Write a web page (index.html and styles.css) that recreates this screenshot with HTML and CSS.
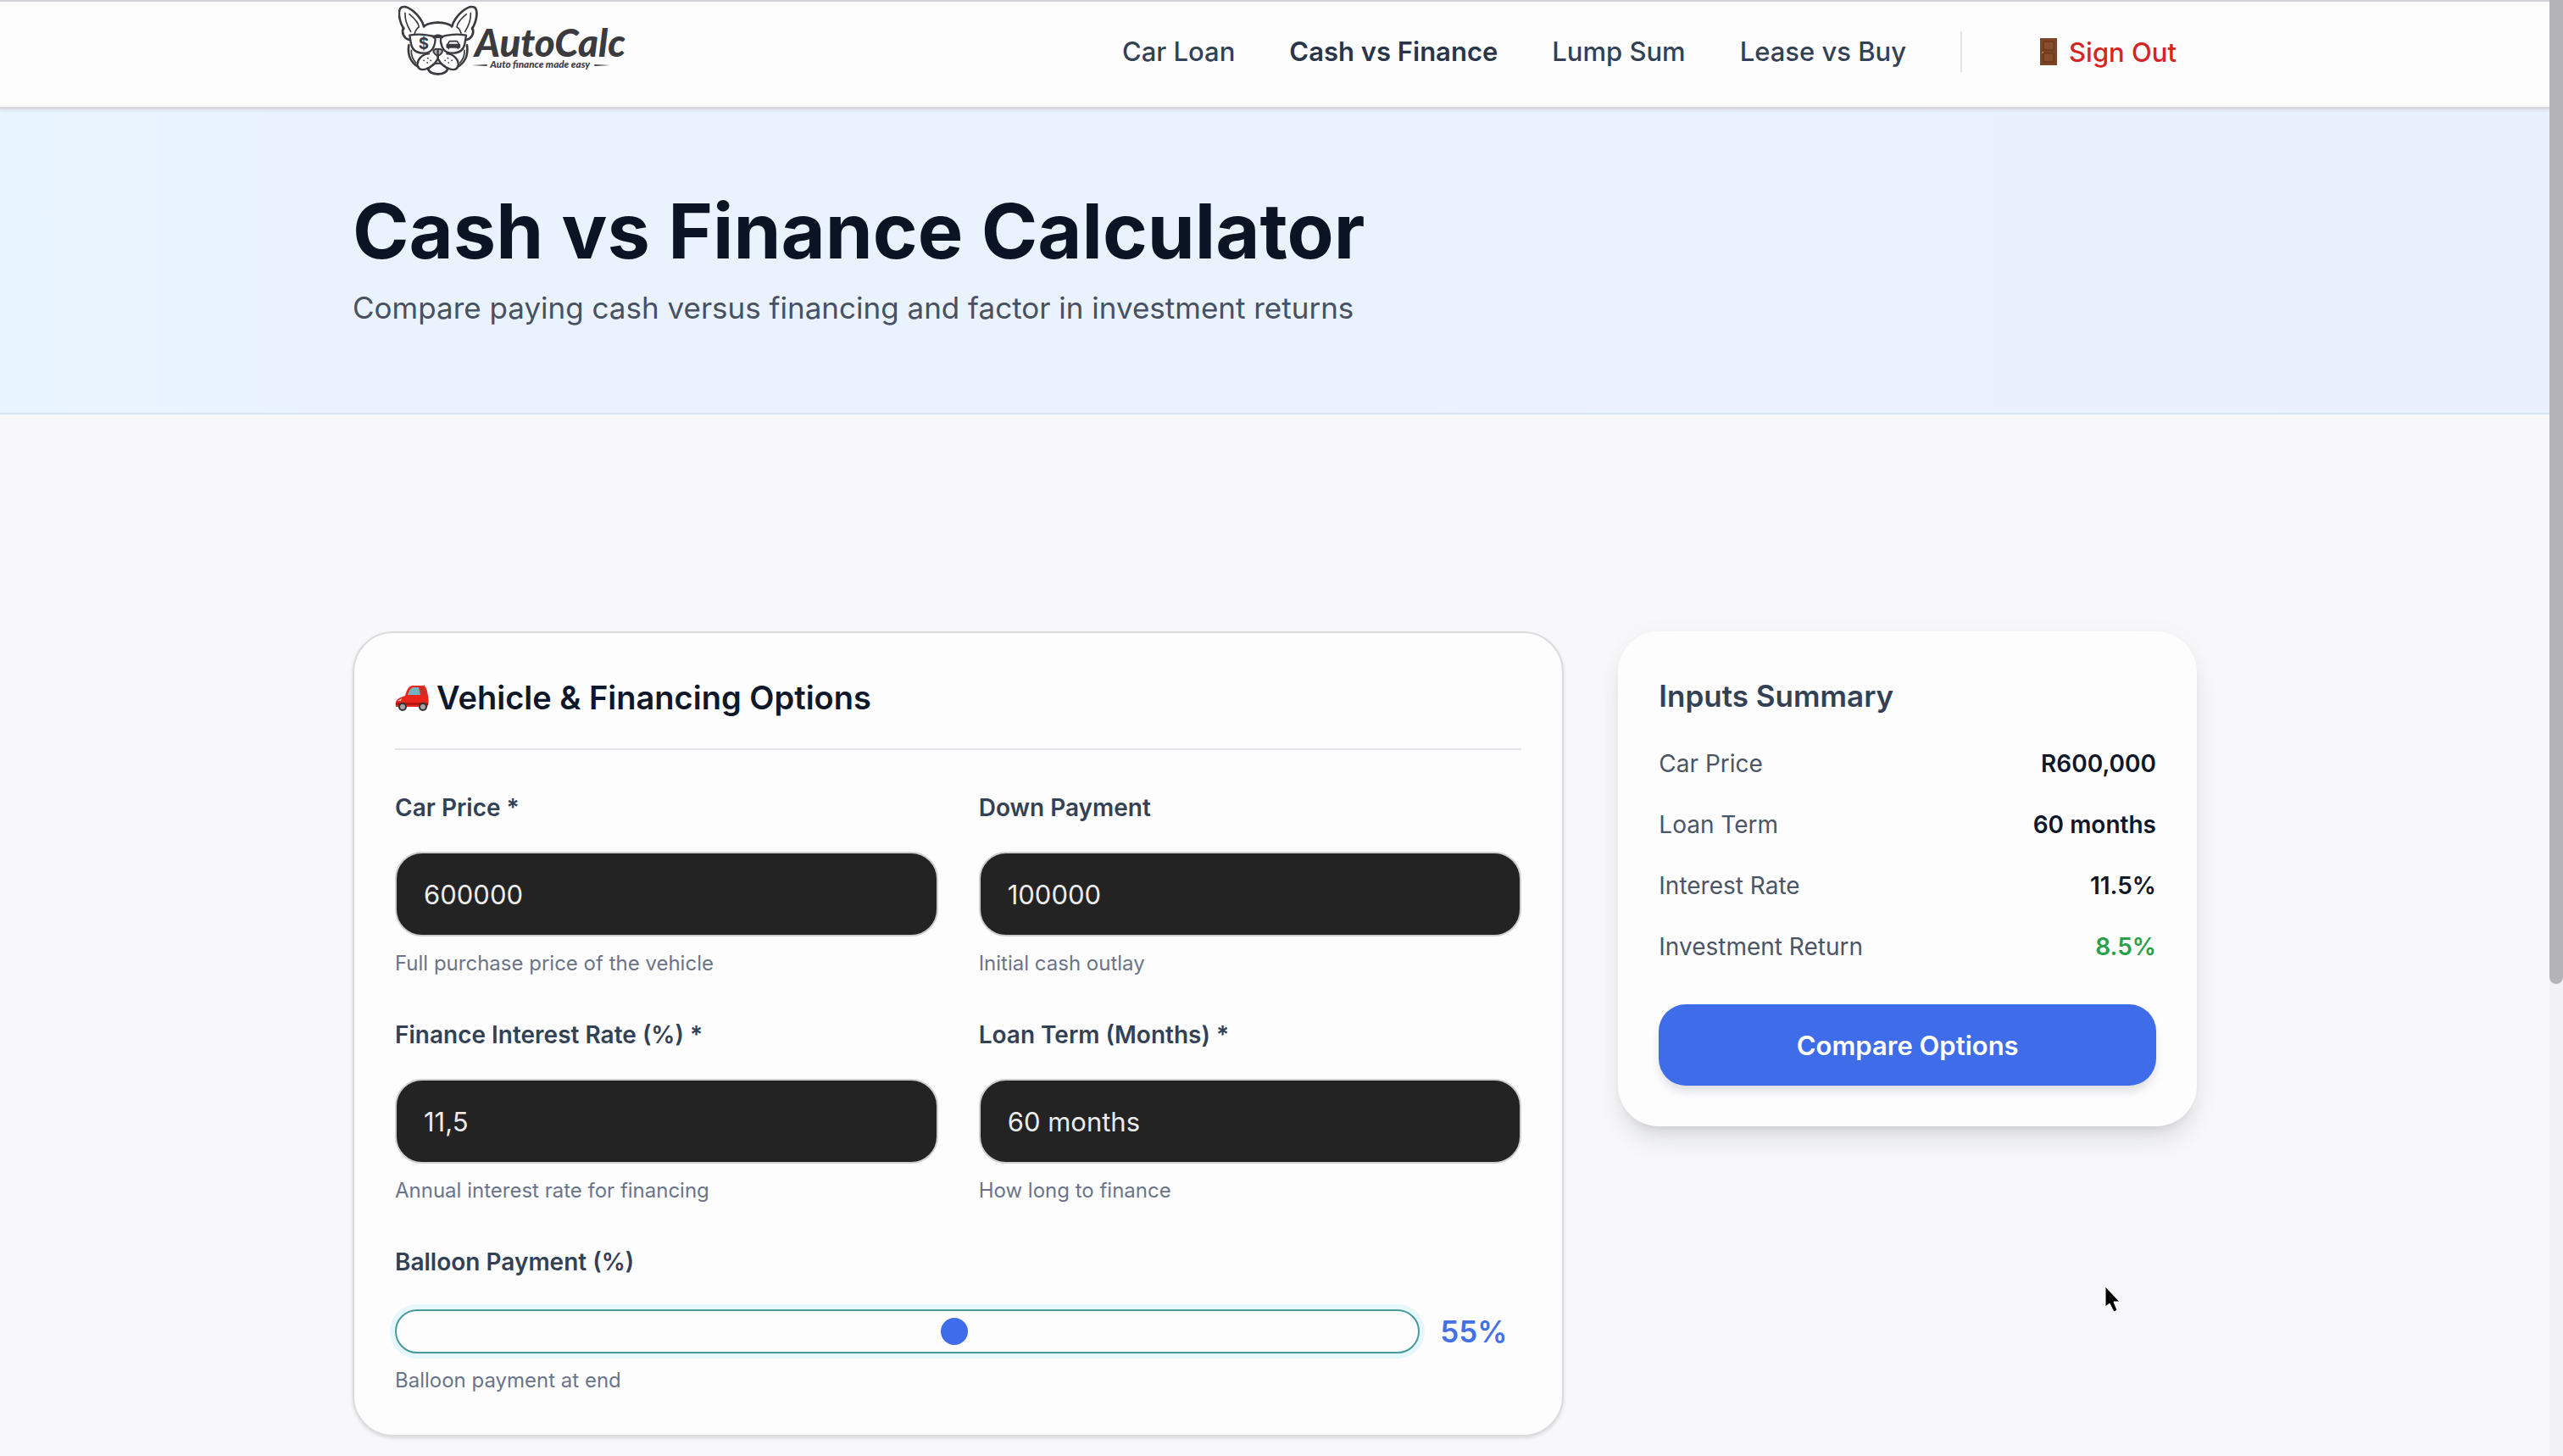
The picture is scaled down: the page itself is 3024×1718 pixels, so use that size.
FILE: index.html
```html
<!DOCTYPE html>
<html lang="en">
<head>
  <meta charset="UTF-8">
  <meta name="viewport" content="width=device-width, initial-scale=1.0">
  <title>AutoCalc - Cash vs Finance Calculator</title>
  <link rel="stylesheet" href="styles.css">
</head>
<body>
  <header class="site-header">
    <div class="container header-inner">
      <a href="#" class="logo" aria-label="AutoCalc home">
        <svg viewBox="60 15 810 255" fill="none" stroke="#3b3b3f" stroke-linecap="round" stroke-linejoin="round">
          <!-- one half of the dog's face, mirrored below -->
          <g id="face-half" stroke-width="8">
            <path d="M79 102C60 70 58 34 71 26C92 16 136 50 151 94" />
            <path d="M78 98C70 116 80 136 98 141" />
            <path d="M84 46C83 66 90 90 104 112M99 50C118 66 132 84 133 96C124 100 121 108 118 118" stroke-width="5" />
            <path d="M150 93C166 82 184 80 200 80" />
            <path d="M100 125C130 119 168 122 190 131C193 152 184 184 160 187C128 191 108 180 104 150Z" stroke-width="7" />
            <path d="M97 160C92 194 104 222 130 236" />
            <path d="M106 178C105 198 112 212 122 222" stroke-width="5" />
            <path d="M186 131Q200 124 202 130" stroke-width="11" />
            <path d="M168 190C146 190 124 212 128 234C138 258 180 244 200 208V198" stroke-width="7" />
            <path d="M164 242C170 258 186 262 200 262" />
            <path d="M168 243C178 228 190 224 200 224" stroke-width="6" />
            <path d="M150 214h1M164 206h1M162 222h1M174 214h1" stroke-width="5" />
            <path d="M200 174C188 172 182 178 185 185Q192 196 200 198Z" fill="#b5b5ba" stroke-width="6" />
          </g>
          <use href="#face-half" transform="matrix(-1 0 0 1 400 0)" />
          <!-- tiny car in the right lens -->
          <path d="M234 158L241 146H268L275 158" stroke-width="5" />
          <path d="M232 158H277V168H232ZM238 168V172M271 168V172" fill="#3b3b3f" stroke-width="5" />
          <g fill="#3b3b3f" stroke="none">
            <text class="logo-dollar" x="131" y="173">$</text>
            <text class="logo-name" x="330" y="200">AutoCalc</text>
            <text class="logo-tag" x="385" y="241">Auto finance made easy</text>
            <path d="M320 231L374 228V234ZM754 228V234L810 231Z" />
          </g>
        </svg>
      </a>
      <nav class="main-nav">
        <a href="#">Car Loan</a>
        <a href="#" class="active">Cash vs Finance</a>
        <a href="#">Lump Sum</a>
        <a href="#">Lease vs Buy</a>
        <span class="nav-divider"></span>
        <button type="button" class="sign-out">
          <svg class="door" viewBox="0 0 20 32">
            <rect width="20" height="32" fill="#7d4426" />
            <path d="M4 4h12v10H4zM4 18h12v10H4z" fill="#8a4d2c" stroke="#5e2f18" />
            <circle cx="3" cy="17" r="1" fill="#b88040" />
          </svg>
          Sign Out
        </button>
      </nav>
    </div>
  </header>

  <section class="hero">
    <div class="container">
      <h1>Cash vs Finance Calculator</h1>
      <p>Compare paying cash versus financing and factor in investment returns</p>
    </div>
  </section>

  <main class="container layout">
    <form class="card options">
      <h2>
        <svg class="car" viewBox="0 0 40 31">
          <path d="M33 3L35 0" stroke="#777" />
          <path d="M1 25C0 19 2 16 12 13C14 6 16 1 21 1H33C37 1 38 7 39 13C40 18 40 23 38 26H3C1 26 1 26 1 25Z" fill="#e8261c" />
          <path d="M15 12C17 6 19 3 22 3H28L30 12Z" fill="#6fb5c0" />
          <path d="M30 3H33Q35 7 36 12H32Z" fill="#b9352c" />
          <path d="M1 21H39V24H1Z" fill="#b8140f" />
          <path d="M3 19L8 16L7 19Z" fill="#ffd9b0" />
          <circle cx="9" cy="26" r="5" fill="#333" />
          <circle cx="9" cy="26" r="3" fill="#a5a5a5" />
          <circle cx="33" cy="26" r="5" fill="#333" />
          <circle cx="33" cy="26" r="3" fill="#a5a5a5" />
        </svg>
        Vehicle &amp; Financing Options
      </h2>

      <div class="fields">
        <div class="field">
          <label for="carPrice">Car Price *</label>
          <input type="text" id="carPrice" value="600000" inputmode="numeric">
          <small>Full purchase price of the vehicle</small>
        </div>
        <div class="field">
          <label for="downPayment">Down Payment</label>
          <input type="text" id="downPayment" value="100000" inputmode="numeric">
          <small>Initial cash outlay</small>
        </div>
        <div class="field">
          <label for="interestRate">Finance Interest Rate (%) *</label>
          <input type="text" id="interestRate" value="11,5" inputmode="decimal">
          <small>Annual interest rate for financing</small>
        </div>
        <div class="field">
          <label for="loanTerm">Loan Term (Months) *</label>
          <select id="loanTerm">
            <option>12 months</option>
            <option>24 months</option>
            <option>36 months</option>
            <option>48 months</option>
            <option selected>60 months</option>
            <option>72 months</option>
          </select>
          <small>How long to finance</small>
        </div>
        <div class="field field-wide">
          <label for="balloon">Balloon Payment (%)</label>
          <div class="range-row">
            <input type="range" id="balloon" min="0" max="100" value="55">
            <output for="balloon" id="balloonValue">55%</output>
          </div>
          <small>Balloon payment at end</small>
        </div>
      </div>
    </form>

    <aside class="card summary">
      <h3>Inputs Summary</h3>
      <dl>
        <div><dt>Car Price</dt><dd>R600,000</dd></div>
        <div><dt>Loan Term</dt><dd>60 months</dd></div>
        <div><dt>Interest Rate</dt><dd>11.5%</dd></div>
        <div><dt>Investment Return</dt><dd class="positive">8.5%</dd></div>
      </dl>
      <button type="button" class="compare-btn">Compare Options</button>
    </aside>
  </main>

  <div class="scrollbar"><div class="scrollbar-thumb"></div></div>
  <svg class="cursor" viewBox="0 0 20 32">
    <path d="M1 1V25L6 21L11 31L15 29L11 19H18Z" fill="#000" stroke="#fff" />
  </svg>

  <script>
    const balloon = document.getElementById('balloon');
    balloon.addEventListener('input', () => {
      document.getElementById('balloonValue').textContent = balloon.value + '%';
    });
  </script>
</body>
</html>
```
FILE: styles.css
```css
* {
  margin: 0;
  padding: 0;
  box-sizing: border-box;
}

body {
  font-family: Inter, "Liberation Sans", sans-serif;
  font-size: 28px;
  line-height: 40px;
  color: #0f172a;
  background: #f8f8fa;
  min-height: 100vh;
  padding-right: 16px;
}

button,
input,
select {
  font-family: inherit;
}

.container {
  max-width: 2176px;
  margin: 0 auto;
}

/* Header */
.site-header {
  position: relative;
  background: #fdfdfe;
  border-top: 2px solid #d2d2d6;
  border-bottom: 3px solid #d8d8de;
  box-shadow: 0 2px 4px rgba(0, 0, 0, 0.06);
}

.header-inner {
  display: flex;
  justify-content: space-between;
  padding: 0 24px 0 54px;
  min-height: 124px;
}

.logo {
  padding-top: 3px;
}

.logo svg {
  display: block;
  width: 270px;
}

.logo-name {
  font: italic 900 137px Lato, sans-serif;
}

.logo-tag {
  font: italic 900 35px Lato, sans-serif;
}

.logo-dollar {
  font: 700 56px Inter, sans-serif;
}

.main-nav {
  display: flex;
  align-items: center;
  gap: 64px;
  padding-bottom: 6px;
  font-size: 31px;
  font-weight: 500;
}

.main-nav a {
  color: #334155;
  text-decoration: none;
}

.main-nav .active {
  font-weight: 600;
  color: #293548;
}

.nav-divider {
  width: 2px;
  height: 48px;
  background: #e2e2ea;
}

.sign-out {
  display: flex;
  align-items: center;
  gap: 14px;
  margin-left: 28px;
  border: none;
  background: none;
  font-size: 31px;
  font-weight: 500;
  color: #d42424;
  cursor: pointer;
}

.door {
  width: 20px;
}

/* Hero */
.hero {
  padding: 96px 0;
  background: linear-gradient(90deg, #e8f4fe, #eaf3fd 12%, #eaf1fd);
  border-bottom: 2px solid #d6e6ec;
}

.hero h1 {
  font-size: 90px;
  line-height: 96px;
  font-weight: 700;
  color: #0b1424;
}

.hero p {
  margin-top: 14px;
  font-size: 35px;
  line-height: 56px;
  color: #475162;
}

/* Layout */
.layout {
  display: grid;
  grid-template-columns: repeat(3, 1fr);
  gap: 64px;
  align-items: start;
  padding: 256px 0 24px;
}

.card {
  background: #fdfdfe;
  border-radius: 48px;
  padding: 48px;
}

.options {
  grid-column: span 2;
  border: 2px solid #dcdcde;
  box-shadow: 0 2px 4px rgba(0, 0, 0, 0.12);
}

.options h2 {
  display: flex;
  align-items: center;
  gap: 9px;
  padding-bottom: 32px;
  margin-bottom: 48px;
  border-bottom: 2px solid #e4e4e8;
  font-size: 38px;
  line-height: 56px;
  font-weight: 600;
}

.car {
  width: 40px;
}

.fields {
  display: grid;
  grid-template-columns: 1fr 1fr;
  gap: 48px;
}

.field {
  display: flex;
  flex-direction: column;
}

.field-wide {
  grid-column: 1 / -1;
}

.field label {
  margin-bottom: 32px;
  font-weight: 600;
  color: #334155;
}

.field input[type="text"],
.field select {
  width: 100%;
  height: 100px;
  padding: 0 32px;
  border: 2px solid #cfcfd0;
  border-radius: 32px;
  background: #232324;
  color: #ececec;
  font-size: 31px;
  appearance: none;
}

.field small {
  margin-top: 16px;
  font-size: 24px;
  line-height: 32px;
  color: #6b7489;
}

.range-row {
  display: flex;
  align-items: center;
  gap: 24px;
  padding-top: 4px;
}

.range-row input {
  flex: 1;
  height: 52px;
  padding: 0 32px;
  border: 2px solid #4a9a9c;
  border-radius: 26px;
  background: #fdfdfe;
  box-shadow: 0 0 0 6px #e6f7fb;
  appearance: none;
}

.range-row input::-webkit-slider-thumb {
  appearance: none;
  width: 32px;
  height: 32px;
  border-radius: 50%;
  background: #3f6ce8;
}

.range-row output {
  min-width: 96px;
  font-size: 35px;
  font-weight: 600;
  color: #4470e6;
}

/* Summary */
.summary {
  box-shadow: 0 20px 30px -6px rgba(15, 23, 42, 0.12), 0 8px 12px -8px rgba(15, 23, 42, 0.12), 0 0 24px rgba(15, 23, 42, 0.03);
}

.summary h3 {
  margin-bottom: 32px;
  font-size: 35px;
  line-height: 56px;
  font-weight: 600;
  color: #334155;
}

.summary dl {
  display: grid;
  gap: 32px;
  margin-bottom: 48px;
}

.summary dl div {
  display: flex;
  justify-content: space-between;
}

.summary dt {
  color: #4b5565;
}

.summary dd {
  font-weight: 600;
}

.summary .positive {
  color: #27a048;
}

.compare-btn {
  width: 100%;
  height: 96px;
  border: none;
  border-radius: 32px;
  background: #3f6ce8;
  box-shadow: 0 8px 12px -2px rgba(15, 23, 42, 0.14);
  color: #fff;
  font-size: 31px;
  font-weight: 600;
  cursor: pointer;
}

/* Window scrollbar and pointer, drawn over the page */
.scrollbar {
  position: fixed;
  top: 0;
  right: 0;
  bottom: 0;
  width: 16px;
  background: #f2f2f4;
}

.scrollbar-thumb {
  height: 1161px;
  border-radius: 0 0 8px 8px;
  background: #b4b4b6;
}

.cursor {
  position: fixed;
  left: 2483px;
  top: 1517px;
  width: 20px;
}
```
